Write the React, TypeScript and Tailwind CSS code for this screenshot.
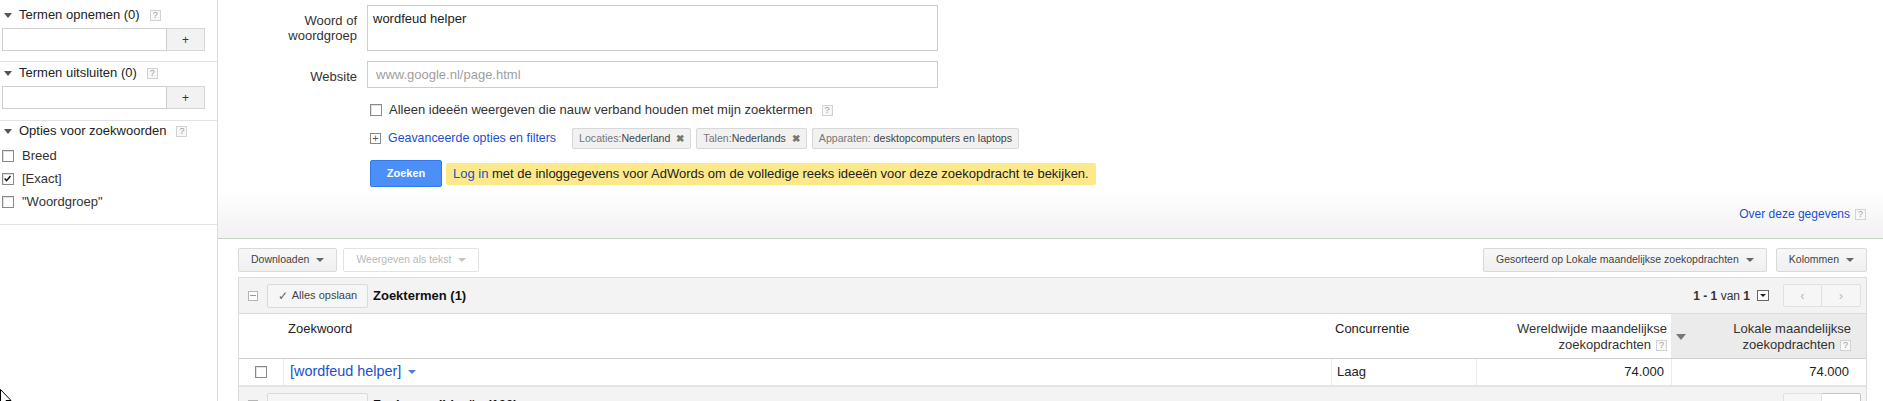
import React from 'react';

function Help({ className = '' }: { className?: string }) {
  return (
    <span
      className={`inline-flex h-[11px] w-[11px] shrink-0 items-center justify-center border border-[#d2d2d2] bg-[#f8f8f8] text-[9px] leading-none text-[#999] ${className}`}
    >
      ?
    </span>
  );
}

function Caret({ color = 'border-t-[#555]' }: { color?: string }) {
  return <span className={`inline-block h-0 w-0 border-x-[4px] border-t-[4px] border-x-transparent ${color}`} />;
}

function Box({ checked = false }: { checked?: boolean }) {
  return (
    <span className="relative inline-block h-[12px] w-[12px] shrink-0 border border-[#8a8a8a] bg-white shadow-[inset_1px_1px_0_#e2e2e2]">
      {checked ? (
        <svg viewBox="0 0 12 12" className="absolute left-[0px] top-[0px] h-[10px] w-[10px]">
          <path d="M2 5.5 L4.3 8 L9 2.5" fill="none" stroke="#111" strokeWidth="1.8" />
        </svg>
      ) : null}
    </span>
  );
}

function SideSection({ title, children, className = '' }: { title: string; children: React.ReactNode; className?: string }) {
  return (
    <div className={`border-b border-[#e3e3e3] ${className}`}>
      <div className="flex h-[18px] items-center gap-[7px] pl-[4px]">
        <span className="inline-block h-0 w-0 border-x-[4px] border-t-[5px] border-x-transparent border-t-[#555]" />
        <span>{title}</span>
        <Help className="ml-[3px]" />
      </div>
      {children}
    </div>
  );
}

function TermInput() {
  return (
    <div className="ml-[2px] mt-[4px] flex h-[23px] w-[203px]">
      <div className="h-full w-[165px] border border-[#cfcfcf] bg-white" />
      <div className="flex h-full w-[38px] items-center justify-center border border-l-0 border-[#d6d6d6] bg-[#f2f2f2] text-[12px] text-[#333]">
        +
      </div>
    </div>
  );
}

function ToolButton({ label, disabled = false }: { label: string; disabled?: boolean }) {
  return (
    <div
      className={`flex h-[24px] items-center gap-[7px] rounded-[2px] border px-[12px] text-[10.5px] ${
        disabled
          ? 'border-[#e3e3e3] bg-white text-[#b9b9b9]'
          : 'border-[#d9d9d9] bg-linear-to-b from-[#f7f7f7] to-[#f0f0f0] text-[#444]'
      }`}
    >
      <span>{label}</span>
      <Caret color={disabled ? 'border-t-[#c4c4c4]' : 'border-t-[#666]'} />
    </div>
  );
}

function Chip({ label, value, close = true }: { label: string; value: string; close?: boolean }) {
  return (
    <div className="flex h-[21px] items-center gap-[6px] rounded-[2px] border border-[#d8d8d8] bg-[#f1f1f1] px-[6px] text-[10.6px]">
      <span>
        <span className="text-[#777]">{label}</span>
        <span className="text-[#444]">{value}</span>
      </span>
      {close ? <span className="text-[10px] font-bold leading-none text-[#777]">✖</span> : null}
    </div>
  );
}

function PageButtons({ active = false, arrows = true }: { active?: boolean; arrows?: boolean }) {
  return (
    <div className="flex">
      <div className="flex h-[23px] w-[39px] items-center justify-center rounded-l-[2px] border border-[#e0e0e0] bg-[#f6f6f6] text-[13px] text-[#bbb]">
        {arrows ? '‹' : null}
      </div>
      <div
        className={`flex h-[23px] w-[39px] items-center justify-center rounded-r-[2px] border border-l-0 text-[13px] ${
          active ? 'border-[#c4c4c4] bg-white text-[#777]' : 'border-[#e0e0e0] bg-[#f6f6f6] text-[#bbb]'
        }`}
      >
        {arrows ? '›' : null}
      </div>
    </div>
  );
}

export default function App() {
  return (
    <div className="relative flex h-[401px] w-[1883px] overflow-hidden bg-white font-['Liberation_Sans',Arial,sans-serif] text-[13px] text-[#222]">
      {/* sidebar */}
      <aside className="w-[218px] shrink-0 border-r border-[#dcdcdc]">
        <SideSection title="Termen opnemen (0)" className="pt-[6px] pb-[10px]">
          <TermInput />
        </SideSection>
        <SideSection title="Termen uitsluiten (0)" className="pt-[2px] pb-[11px]">
          <TermInput />
        </SideSection>
        <SideSection title="Opties voor zoekwoorden" className="pt-[1px] pb-[11px]">
          <div className="mt-[4px] flex flex-col">
            {[
              { label: 'Breed', checked: false },
              { label: '[Exact]', checked: true },
              { label: '"Woordgroep"', checked: false },
            ].map((opt) => (
              <label key={opt.label} className="flex h-[23px] items-center gap-[8px] pl-[2px]">
                <Box checked={opt.checked} />
                <span className="text-[#333]">{opt.label}</span>
              </label>
            ))}
          </div>
        </SideSection>
      </aside>

      {/* main */}
      <main className="flex min-w-0 flex-1 flex-col">
        <section className="flex h-[239px] shrink-0 flex-col border-b border-[#c8d6c8] bg-linear-to-b from-white from-80% to-[#f1f1f1]">
          <div className="grid grid-cols-[139px_571px] gap-x-[10px]">
            <div className="mt-[5px] pt-[8px] text-right leading-[15px] text-[#333]">
              Woord of
              <br />
              woordgroep
            </div>
            <div className="mt-[5px] h-[46px] border border-[#cdcdcd] bg-white px-[5px] pt-[3px] text-[#222]">
              wordfeud helper
            </div>

            <div className="mt-[10px] flex items-center justify-end pt-[4px] text-[#333]">Website</div>
            <div className="mt-[10px] flex h-[27px] items-center border border-[#cdcdcd] bg-white px-[8px] text-[#a0a0a0]">
              www.google.nl/page.html
            </div>

            <div className="col-start-2 ml-[3px] mt-[13px] flex h-[18px] items-center gap-[7px]">
              <Box />
              <span className="text-[#333]">Alleen ideeën weergeven die nauw verband houden met mijn zoektermen</span>
              <Help className="ml-[2px]" />
            </div>

            <div className="col-start-2 ml-[3px] mt-[9px] flex h-[21px] w-[700px] items-center">
              <span className="flex h-[11px] w-[11px] items-center justify-center border border-[#888] text-[11px] leading-none text-[#555]">
                +
              </span>
              <span className="ml-[7px] text-[12.4px] text-[#1a4fd1]">Geavanceerde opties en filters</span>
              <div className="ml-[16px] flex gap-[5px]">
                <Chip label="Locaties:" value="Nederland" />
                <Chip label="Talen:" value="Nederlands" />
                <Chip label="Apparaten: " value="desktopcomputers en laptops" close={false} />
              </div>
            </div>

            <div className="col-start-2 ml-[3px] mt-[11px] flex w-[800px] items-center gap-[4px]">
              <div className="flex h-[27px] w-[72px] items-center justify-center rounded-[2px] border border-[#3079ed] bg-[#4d8ff8] text-[11px] font-bold text-white">
                Zoeken
              </div>
              <div className="flex h-[22px] items-center rounded-[2px] bg-[#fde98a] px-[7px] text-[#222]">
                <span className="text-[#1a4fd1]">Log in</span>
                <span>&nbsp;met de inloggegevens voor AdWords om de volledige reeks ideeën voor deze zoekopdracht te bekijken.</span>
              </div>
            </div>
          </div>

          <div className="mt-auto flex items-center justify-end gap-[5px] pb-[15px] pr-[17px] text-[12px]">
            <span className="text-[#1a4fd1]">Over deze gegevens</span>
            <Help />
          </div>
        </section>

        <div className="pl-[20px] pr-[16px] pt-[9px]">
          {/* toolbar */}
          <div className="flex items-center justify-between">
            <div className="flex gap-[6px]">
              <ToolButton label="Downloaden" />
              <ToolButton label="Weergeven als tekst" disabled />
            </div>
            <div className="flex gap-[9px]">
              <ToolButton label="Gesorteerd op Lokale maandelijkse zoekopdrachten" />
              <ToolButton label="Kolommen" />
            </div>
          </div>

          {/* table */}
          <div className="mt-[5px] border border-[#dcdcdc]">
            <div className="flex h-[36px] items-center border-b border-[#dcdcdc] bg-[#f3f3f3] pl-[9px] pr-[5px]">
              <span className="flex h-[10px] w-[10px] items-center justify-center border border-[#b5b5b5] bg-white">
                <span className="h-[1px] w-[6px] bg-[#999]" />
              </span>
              <div className="ml-[9px] flex h-[24px] w-[101px] items-center justify-center gap-[4px] rounded-[2px] border border-[#dadada] bg-[#f6f6f6] text-[11px] text-[#444]">
                <span className="text-[12px] text-[#666]">✓</span>
                <span>Alles opslaan</span>
              </div>
              <span className="ml-[5px] font-bold text-[#111]">Zoektermen (1)</span>
              <div className="ml-auto flex items-center">
                <span className="text-[12px] text-[#333]">
                  <b>1 - 1</b> van <b>1</b>
                </span>
                <span className="ml-[7px] flex h-[11px] w-[12px] items-center justify-center border border-[#666] bg-white">
                  <span className="inline-block h-0 w-0 border-x-[3px] border-t-[3px] border-x-transparent border-t-[#222]" />
                </span>
                <div className="ml-[14px]">
                  <PageButtons />
                </div>
              </div>
            </div>

            <div className="grid h-[45px] grid-cols-[44px_1048px_145px_195px_1fr] border-b border-[#cfcfcf] leading-[16px]">
              <div />
              <div className="pl-[5px] pt-[7px]">Zoekwoord</div>
              <div className="pl-[4px] pt-[7px]">Concurrentie</div>
              <div className="flex flex-col items-end pr-[4px] pt-[7px] text-[#333]">
                <span className="whitespace-nowrap">Wereldwijde maandelijkse</span>
                <span className="flex items-center gap-[5px] whitespace-nowrap">
                  zoekopdrachten <Help />
                </span>
              </div>
              <div className="flex bg-[#ebebeb] pt-[7px]">
                <span className="ml-[5px] mt-[13px] inline-block h-0 w-0 border-x-[5px] border-t-[6px] border-x-transparent border-t-[#777]" />
                <div className="ml-auto flex flex-col items-end pr-[15px] text-[#333]">
                  <span className="whitespace-nowrap">Lokale maandelijkse</span>
                  <span className="flex items-center gap-[5px] whitespace-nowrap">
                    zoekopdrachten <Help />
                  </span>
                </div>
              </div>
            </div>

            <div className="grid h-[28px] grid-cols-[44px_1048px_145px_195px_1fr] border-b-2 border-[#e4e4e4]">
              <div className="flex items-center justify-center pr-[1px]">
                <Box />
              </div>
              <div className="flex items-center gap-[7px] border-l border-[#ececec] pl-[6px]">
                <span className="text-[14.4px] text-[#1a4fd1]">[wordfeud helper]</span>
                <Caret color="border-t-[#4a7fe0]" />
              </div>
              <div className="flex items-center border-l border-[#ececec] pl-[5px]">Laag</div>
              <div className="flex items-center justify-end border-l border-[#ececec] pr-[7px]">74.000</div>
              <div className="flex items-center justify-end border-l border-[#ececec] pr-[17px]">74.000</div>
            </div>

            <div className="flex h-[40px] items-start bg-[#f3f3f3] pl-[9px] pr-[5px] pt-[6px]">
              <span className="mt-[7px] flex h-[10px] w-[10px] items-center justify-center border border-[#b5b5b5] bg-white">
                <span className="h-[1px] w-[6px] bg-[#999]" />
              </span>
              <div className="ml-[9px] h-[24px] w-[101px] rounded-[2px] border border-[#dadada] bg-[#f6f6f6]" />
              <span className="ml-[5px] mt-[2px] font-bold text-[#111]">Zoekwoordideeën (100)</span>
              <div className="ml-auto">
                <PageButtons active arrows={false} />
              </div>
            </div>
          </div>
        </div>
      </main>

      {/* mouse pointer */}
      <svg viewBox="0 0 12 19" className="absolute left-0 top-[389px] h-[19px] w-[12px]">
        <path d="M0.5 0.5 L0.5 16 L4 12.5 L6.5 18 L8.5 17 L6 11.5 L11 11.5 Z" fill="white" stroke="black" strokeWidth="1" />
      </svg>
    </div>
  );
}
